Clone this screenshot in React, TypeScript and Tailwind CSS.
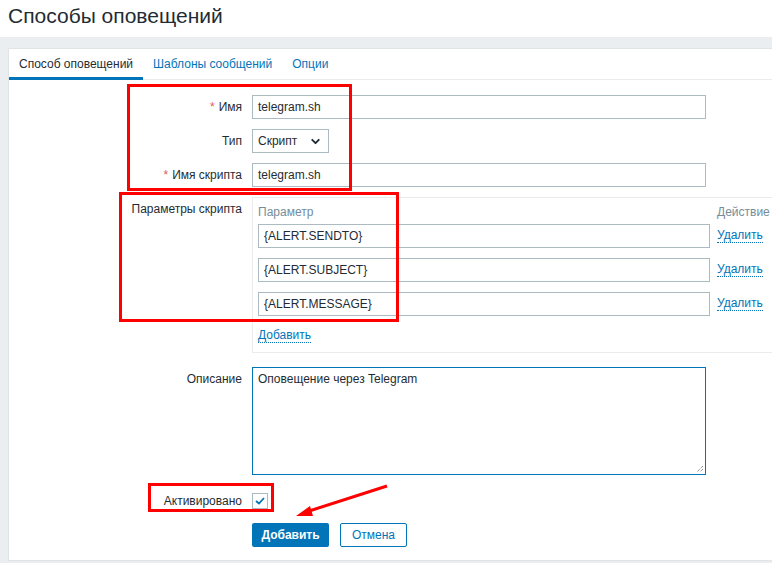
import { ChevronDown } from "lucide-react"

const labelCls = "w-[243px] shrink-0 pr-[10px] text-right text-[12px] text-[#1f2c33]"
const inputCls = "h-[24px] border border-[#acbbc2] bg-white px-[5px] text-[12px] text-[#1f2c33] flex items-center"

function Req() {
    return <span className="text-[#e45959] mr-[4px]">*</span>
}

function ParamRow({ value }: { value: string }) {
    return (
        <div className="flex items-center h-[24px]">
            <div className={`${inputCls} w-[452px]`}>{value}</div>
            <span className="ml-[7px] text-[12px] text-[#0275b8] border-b border-dotted border-[#0275b8] leading-[13px]">Удалить</span>
        </div>
    )
}

export default function App() {
    return (
        <div className="relative w-[772px] h-[563px] overflow-hidden bg-[#ebeef0] font-['Liberation_Sans',Arial,sans-serif] text-[#1f2c33]">
            <div className="h-[37px] bg-white pl-[8px] flex items-center">
                <h1 className="text-[21px] leading-none text-[#1f2c33] mt-[-6px]">Способы оповещений</h1>
            </div>

            <div className="ml-[8px] mt-[11px] h-[513px] bg-white border border-[#dfe4e7] border-r-0">
                {/* tabs */}
                <div className="flex h-[31px] border-b border-[#ebebeb] text-[12px]">
                    <div className="px-[10px] pt-[6px] border-b-[3px] border-[#0275b8] mb-[-1px] text-[#1f2c33]">Способ оповещений</div>
                    <div className="px-[10px] pt-[6px] text-[#0275b8]">Шаблоны сообщений</div>
                    <div className="px-[10px] pt-[6px] text-[#0275b8]">Опции</div>
                </div>

                <div className="pt-[15px] flex flex-col">
                    <div className="flex items-center h-[24px]">
                        <div className={labelCls}><Req />Имя</div>
                        <div className={`${inputCls} w-[454px]`}>telegram.sh</div>
                    </div>

                    <div className="flex items-center h-[24px] mt-[10px]">
                        <div className={labelCls}>Тип</div>
                        <div className={`${inputCls} w-[77px] justify-between pr-[6px]`}>
                            <span>Скрипт</span>
                            <ChevronDown size={13} strokeWidth={3.5} className="text-[#1f2c33]" />
                        </div>
                    </div>

                    <div className="flex items-center h-[24px] mt-[10px]">
                        <div className={labelCls}><Req />Имя скрипта</div>
                        <div className={`${inputCls} w-[454px]`}>telegram.sh</div>
                    </div>

                    <div className="flex mt-[10px]">
                        <div className={`${labelCls} pt-[3px]`}>Параметры скрипта</div>
                        <div className="flex-1 h-[156px] border border-[#ebebeb] border-r-0 pl-[5px] pt-[7px]">
                            <div className="flex text-[12px] text-[#768d99] h-[14px] leading-[14px]">
                                <span className="w-[459px]">Параметр</span>
                                <span>Действие</span>
                            </div>
                            <div className="flex flex-col gap-[10px] mt-[5px]">
                                <ParamRow value="{ALERT.SENDTO}" />
                                <ParamRow value="{ALERT.SUBJECT}" />
                                <ParamRow value="{ALERT.MESSAGE}" />
                            </div>
                            <div className="mt-[6px]">
                                <span className="text-[12px] text-[#0275b8] border-b border-dotted border-[#0275b8] leading-[13px]">Добавить</span>
                            </div>
                        </div>
                    </div>

                    <div className="flex mt-[14px]">
                        <div className={`${labelCls} pt-[3px]`}>Описание</div>
                        <div className="relative w-[454px] h-[108px] border border-[#0275b8] px-[5px] pt-[2px] text-[12px]">
                            Оповещение через Telegram
                            <svg className="absolute right-[1px] bottom-[1px]" width="9" height="9" viewBox="0 0 9 9">
                                <path d="M8 2 L2 8 M8 5 L5 8" stroke="#666" strokeWidth="1" strokeDasharray="1 1" />
                            </svg>
                        </div>
                    </div>

                    <div className="flex items-center h-[16px] mt-[18px]">
                        <div className={labelCls}>Активировано</div>
                        <div className="w-[16px] h-[16px] border border-[#acbbc2] flex items-center justify-center">
                            <svg width="10" height="8" viewBox="0 0 10 8">
                                <path d="M1 4 L4 6.5 L9 1" stroke="#0275b8" strokeWidth="1.8" fill="none" />
                            </svg>
                        </div>
                    </div>

                    <div className="flex items-center mt-[14px] pl-[243px] gap-[11px]">
                        <button className="h-[24px] w-[77px] bg-[#0275b8] rounded-[2px] text-white text-[12px] font-bold">Добавить</button>
                        <button className="h-[24px] w-[67px] bg-white border border-[#0275b8] rounded-[2px] text-[#0275b8] text-[12px]">Отмена</button>
                    </div>
                </div>
            </div>

            {/* annotation overlays */}
            <div className="absolute left-[127px] top-[84px] w-[225px] h-[107px] border-[3px] border-[#ff0000]" />
            <div className="absolute left-[119px] top-[192px] w-[280px] h-[130px] border-[3px] border-[#ff0000]" />
            <div className="absolute left-[148px] top-[483px] w-[126px] h-[29px] border-[3px] border-[#ff0000]" />
            <svg className="absolute left-0 top-0" width="772" height="563">
                <line x1="387" y1="486" x2="306" y2="512" stroke="#ff0000" strokeWidth="3" />
                <polygon points="296,516 310,506 313,516" fill="#ff0000" />
            </svg>
        </div>
    )
}
